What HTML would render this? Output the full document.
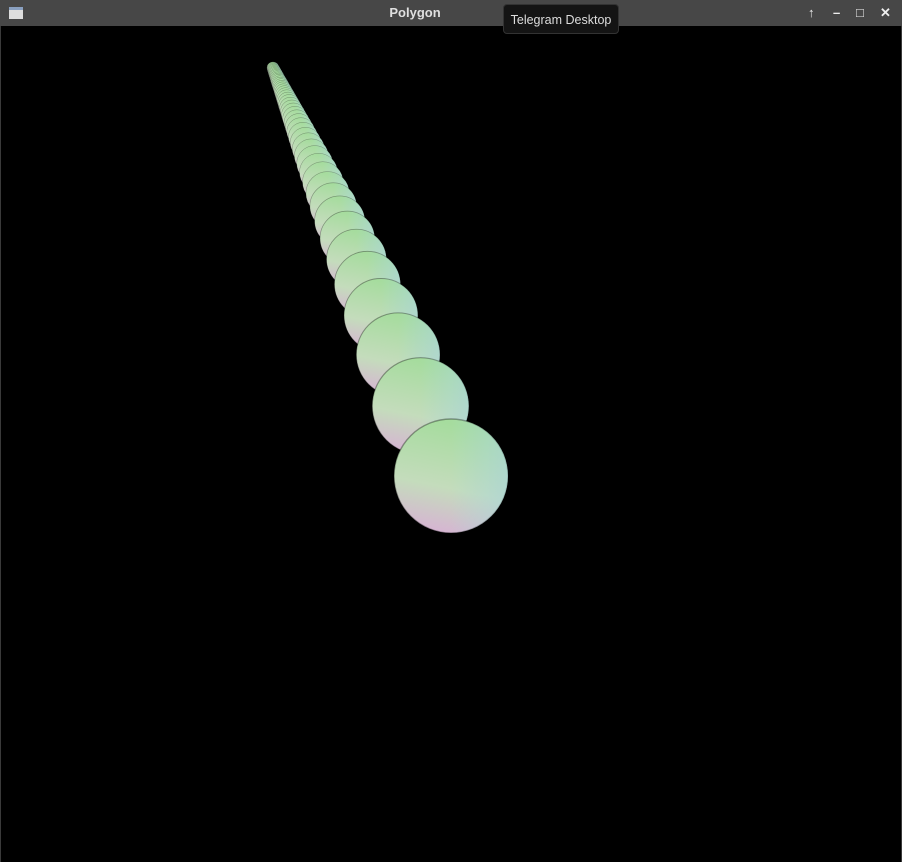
<!DOCTYPE html>
<html><head><style>
body{margin:0;width:902px;height:862px;background:#000;overflow:hidden;font-family:"Liberation Sans",sans-serif}
#tb{position:absolute;left:0;top:0;width:902px;height:26px;background:#474747;}
#title{position:absolute;left:0;width:830px;top:5px;text-align:center;color:#e0e0e0;font-weight:bold;font-size:13px}
#tip{position:absolute;left:503px;top:4px;width:116px;height:30px;background:#141414;border:1px solid #333;border-radius:4px;color:#ddd;font-size:12.5px;line-height:30px;text-align:center;box-sizing:border-box}
#ic{position:absolute;left:9px;top:7px;width:14px;height:12px;background:#ddd;border-top:3px solid #8aa0c0;box-sizing:border-box}
.b{position:absolute;top:5px;color:#eee;font-size:13px;font-weight:bold}
#lb{position:absolute;left:0;top:26px;width:1px;height:836px;background:#3a3a3a}
#rb{position:absolute;right:0;top:26px;width:1px;height:836px;background:#3a3a3a}
svg{position:absolute;left:0;top:0}
</style></head><body>
<svg id="s" width="902" height="862">
<defs>
<linearGradient id="g" x1="0.3" y1="0" x2="0.1" y2="1">
<stop offset="0" stop-color="#a6dc9e"/><stop offset="0.55" stop-color="#c4dcbc"/><stop offset="1" stop-color="#d9aed6"/></linearGradient>
<linearGradient id="h" x1="0" y1="0" x2="1" y2="0">
<stop offset="0.5" stop-color="#a8d8e0" stop-opacity="0"/><stop offset="1" stop-color="#a8d4e0" stop-opacity="0.6"/></linearGradient>
</defs>
</svg>
<div id="tb"><div id="ic"></div><div id="title">Polygon</div>
<span class="b" style="left:808px">↑</span><span class="b" style="left:833px">–</span><span class="b" style="left:856px">□</span><span class="b" style="left:880px">✕</span></div>
<div id="lb"></div><div id="rb"></div>
<div id="tip">Telegram Desktop</div>
<script>
var s=document.getElementById('s'),out='';
var Vx=252,Vy=20,C0x=451,C0y=476,r0=57;
for(var i=47;i>=0;i--){var r=1/(1/r0+0.00318*i);var f=r/r0;
var x=Vx+(C0x-Vx)*f,y=Vy+(C0y-Vy)*f;
var sw=Math.max(0.5,r/40);
out+='<circle cx="'+x.toFixed(1)+'" cy="'+y.toFixed(1)+'" r="'+r.toFixed(1)+'" fill="url(#g)" stroke="rgba(0,0,0,0.35)" stroke-width="'+sw.toFixed(2)+'"/><circle cx="'+x.toFixed(1)+'" cy="'+y.toFixed(1)+'" r="'+r.toFixed(1)+'" fill="url(#h)"/>';}
s.innerHTML+=out;
</script>
</body></html>
